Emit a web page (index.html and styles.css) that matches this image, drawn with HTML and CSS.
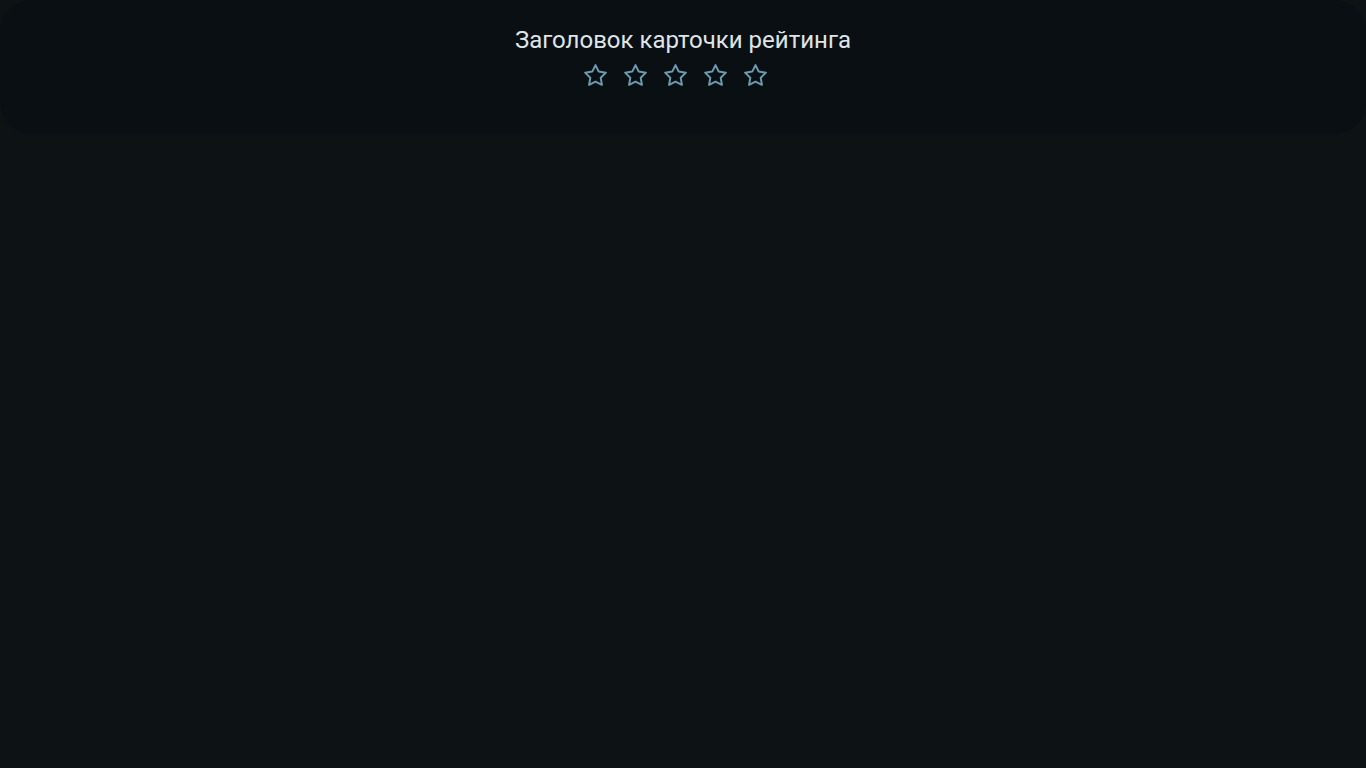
FILE: index.html
```html
<!DOCTYPE html>
<html lang="ru">
<head>
<meta charset="utf-8">
<link rel="stylesheet" href="styles.css">
</head>
<body>
<section class="card">
  <h1 class="title">Заголовок карточки рейтинга</h1>
  <div class="stars">
    <svg class="star" viewBox="0 0 24 24"><polygon points="12 2 15.09 8.26 22 9.27 17 14.14 18.18 21.02 12 17.77 5.82 21.02 7 14.14 2 9.27 8.91 8.26 12 2"/></svg>
    <svg class="star" viewBox="0 0 24 24"><polygon points="12 2 15.09 8.26 22 9.27 17 14.14 18.18 21.02 12 17.77 5.82 21.02 7 14.14 2 9.27 8.91 8.26 12 2"/></svg>
    <svg class="star" viewBox="0 0 24 24"><polygon points="12 2 15.09 8.26 22 9.27 17 14.14 18.18 21.02 12 17.77 5.82 21.02 7 14.14 2 9.27 8.91 8.26 12 2"/></svg>
    <svg class="star" viewBox="0 0 24 24"><polygon points="12 2 15.09 8.26 22 9.27 17 14.14 18.18 21.02 12 17.77 5.82 21.02 7 14.14 2 9.27 8.91 8.26 12 2"/></svg>
    <svg class="star" viewBox="0 0 24 24"><polygon points="12 2 15.09 8.26 22 9.27 17 14.14 18.18 21.02 12 17.77 5.82 21.02 7 14.14 2 9.27 8.91 8.26 12 2"/></svg>
  </div>
</section>
</body>
</html>
```
FILE: styles.css
```css
html, body {
  margin: 0;
  padding: 0;
  height: 100%;
  background: #0d1215;
  font-family: Roboto, "Noto Sans", sans-serif;
}
.card {
  background: #0a0f13;
  border-radius: 32px;
  height: 134px;
  box-sizing: border-box;
  padding-top: 24px;
  display: flex;
  flex-direction: column;
  align-items: center;
}
.title {
  margin: 0;
  font-size: 24px;
  font-weight: 400;
  line-height: 32px;
  color: #dfe4e7;
}
.stars {
  display: flex;
  margin-top: 7px;
}
.star {
  width: 25px;
  height: 25px;
  margin-right: 15px;
  fill: none;
  stroke: #6a9aab;
  stroke-width: 1.9;
  stroke-linejoin: round;
}
```
